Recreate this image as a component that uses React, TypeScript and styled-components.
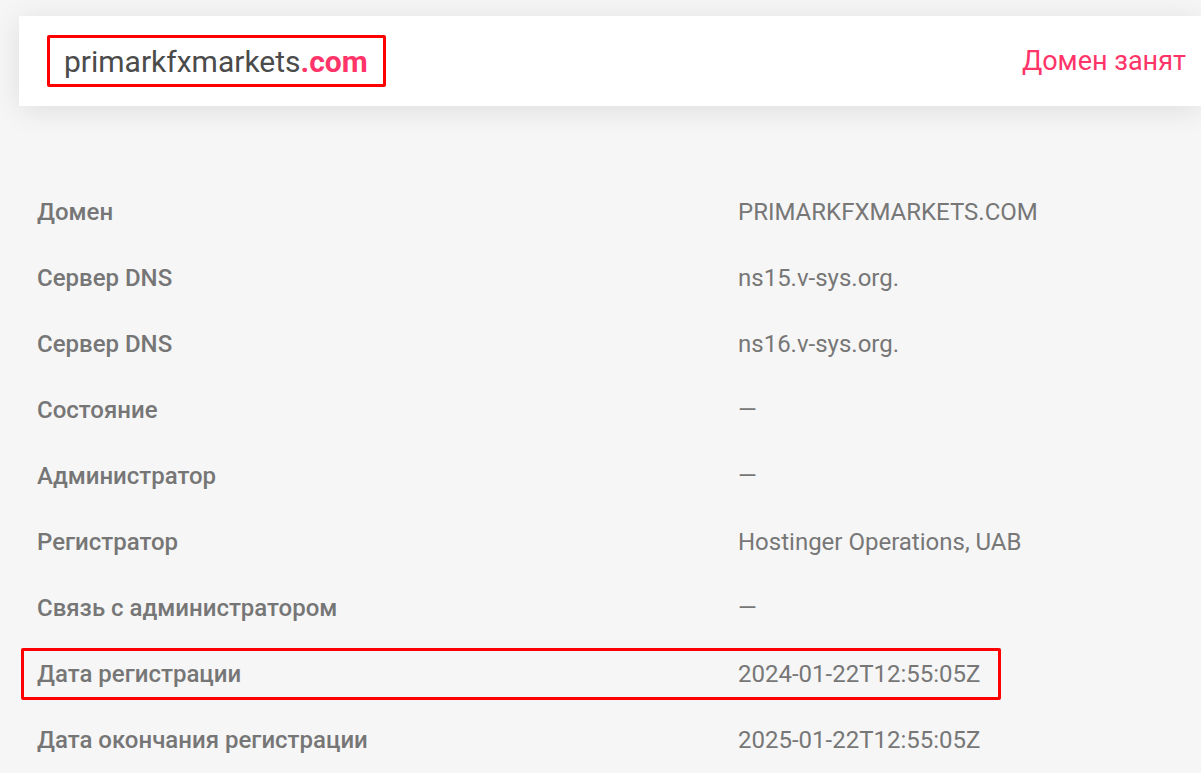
import React from "react";
import styled, { createGlobalStyle } from "styled-components";

const Global = createGlobalStyle`
  html, body { margin: 0; padding: 0; background: #f6f6f6; overflow: hidden; }
  body { font-family: Roboto, "Noto Sans", Arial, sans-serif; }
`;

const Page = styled.div`
  width: 1201px;
  height: 773px;
  background: #f6f6f6;
  overflow: hidden;
  padding-top: 16px;
  box-sizing: border-box;
`;

const HeaderCard = styled.header`
  margin-left: 19px;
  height: 90px;
  background: #ffffff;
  box-shadow: 0 4px 30px rgba(0, 0, 0, 0.1);
  display: flex;
  align-items: center;
  justify-content: space-between;
  padding: 0 15px 0 28px;
  box-sizing: border-box;
`;

const DomainBox = styled.div`
  border: 3px solid #ff0000;
  border-radius: 2px;
  height: 52px;
  box-sizing: border-box;
  display: flex;
  align-items: center;
  padding: 0 15px 0 14px;
  font-size: 30px;
  color: #4b4b4b;
  white-space: nowrap;
`;

const Tld = styled.span`
  color: #ff3468;
  font-weight: 700;
`;

const Status = styled.div`
  font-size: 27px;
  color: #ff3468;
  white-space: nowrap;
`;

const Table = styled.div`
  margin-top: 80px;
  margin-left: 21px;
  width: 980px;
  display: flex;
  flex-direction: column;
  gap: 14px;
`;

const Row = styled.div<{ $marked?: boolean }>`
  height: 52px;
  display: grid;
  grid-template-columns: 701px 1fr;
  align-items: center;
  padding-left: 16px;
  box-sizing: border-box;
  outline: ${(p) => (p.$marked ? "3px solid #ff0000" : "none")};
  outline-offset: -3px;
  border-radius: 2px;
`;

const Label = styled.div`
  font-size: 24px;
  font-weight: 500;
  color: #767676;
  white-space: nowrap;
`;

const Value = styled.div`
  font-size: 24px;
  color: #777777;
  white-space: nowrap;
`;

const rows: { label: string; value: string; marked?: boolean }[] = [
  { label: "Домен", value: "PRIMARKFXMARKETS.COM" },
  { label: "Сервер DNS", value: "ns15.v-sys.org." },
  { label: "Сервер DNS", value: "ns16.v-sys.org." },
  { label: "Состояние", value: "—" },
  { label: "Администратор", value: "—" },
  { label: "Регистратор", value: "Hostinger Operations, UAB" },
  { label: "Связь с администратором", value: "—" },
  { label: "Дата регистрации", value: "2024-01-22T12:55:05Z", marked: true },
  { label: "Дата окончания регистрации", value: "2025-01-22T12:55:05Z" },
];

export default function App() {
  return (
    <>
      <Global />
      <Page>
        <HeaderCard>
          <DomainBox>
            primarkfxmarkets<Tld>.com</Tld>
          </DomainBox>
          <Status>Домен занят</Status>
        </HeaderCard>
        <Table>
          {rows.map((r, i) => (
            <Row key={i} $marked={r.marked}>
              <Label>{r.label}</Label>
              <Value>{r.value}</Value>
            </Row>
          ))}
        </Table>
      </Page>
    </>
  );
}
